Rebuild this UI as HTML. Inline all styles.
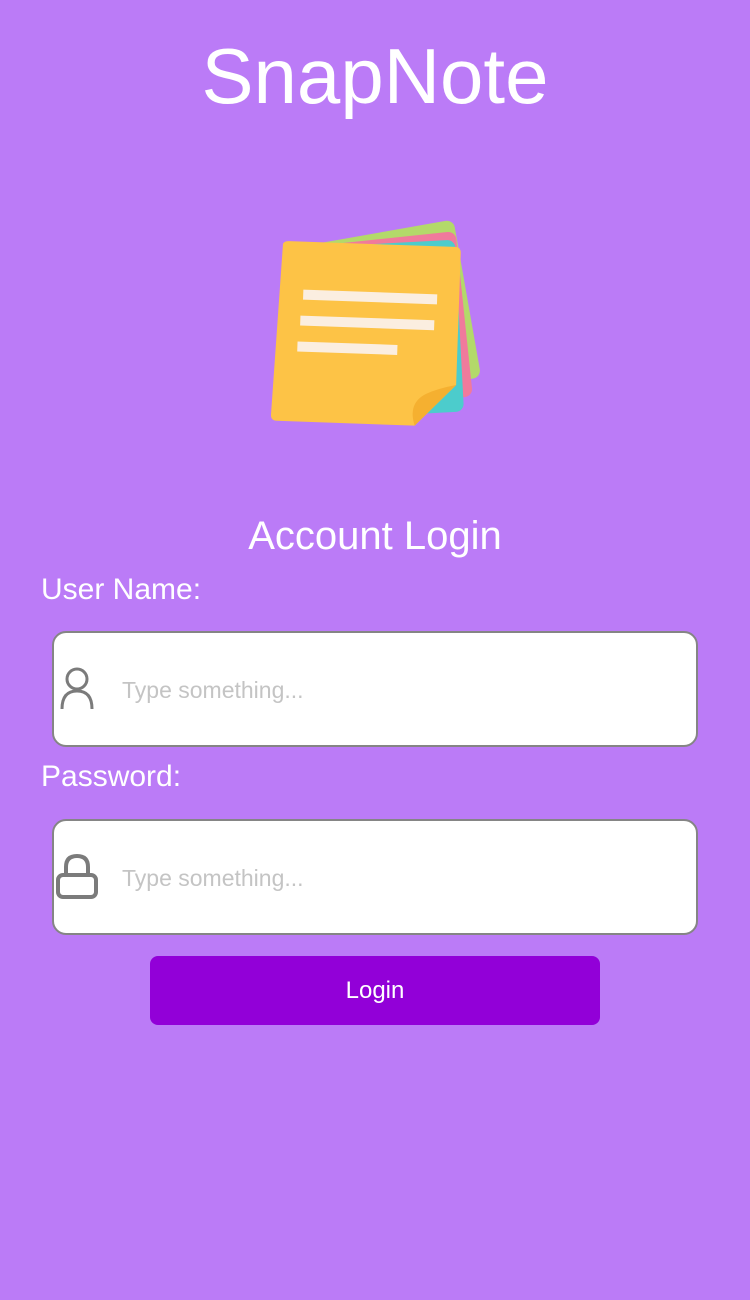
<!DOCTYPE html>
<html><head><meta charset="utf-8"><style>
body{margin:0;width:750px;height:1300px;background:#bb7bf7;font-family:"Liberation Sans",sans-serif;position:relative;overflow:hidden;color:#fff}
.abs{position:absolute}
.title{left:0;width:750px;top:28px;text-align:center;font-size:78px;line-height:96px}
.h2{left:0;width:750px;top:512px;text-align:center;font-size:40px;line-height:48px}
.lbl{left:41px;font-size:30px;line-height:36px}
.inp{left:52px;width:646px;height:116px;background:#fff;border:2px solid #858585;border-radius:14px;box-sizing:border-box}
.ph{left:122px;font-size:23px;color:#c4c4c4}
.btn{left:150px;top:956px;width:450px;height:69px;background:#9200d8;border-radius:8px;text-align:center;line-height:69px;font-size:24px}
</style></head><body>
<div class="abs title">SnapNote</div>
<svg class="abs" style="left:260px;top:210px" width="230" height="230" viewBox="0 0 230 230">
<g transform="rotate(-10 40 130)"><rect x="40" y="38" width="172" height="160" rx="8" fill="#b3d96a"/></g>
<g transform="rotate(-6 40 130)"><rect x="36" y="38" width="170" height="166" rx="8" fill="#f07a9c"/></g>
<g transform="rotate(-3 40 130)"><rect x="30" y="38" width="170" height="172" rx="8" fill="#4ccccc"/></g>
<g transform="rotate(2 110 120)">
<path d="M20 38 Q20 34 26 34 L192 34 Q198 34 198 40 L198 172 L158 214 L20 214 Q14 214 14 208 Z" fill="#fdc346"/>
<path d="M198 172 L158 214 Q150 192 168 182 Q180 176 198 172Z" fill="#f5b030"/>
<rect x="42" y="82" width="134" height="10" fill="#fbeee0"/>
<rect x="40" y="108" width="134" height="10" fill="#fbeee0"/>
<rect x="38" y="134" width="100" height="10" fill="#fbeee0"/>
</g>
</svg>
<div class="abs h2">Account Login</div>
<div class="abs lbl" style="top:572px">User Name:</div>
<div class="abs inp" style="top:631px"></div>
<svg class="abs" style="left:58px;top:667px" width="38" height="44" viewBox="0 0 38 44"><g fill="none" stroke="#7b7b7b" stroke-width="3"><circle cx="19" cy="12" r="10"/><path d="M4 42 Q4 24 19 24 Q34 24 34 42"/></g></svg>
<div class="abs ph" style="top:677px">Type something...</div>
<div class="abs lbl" style="top:759px">Password:</div>
<div class="abs inp" style="top:819px"></div>
<svg class="abs" style="left:55px;top:853px" width="44" height="48" viewBox="0 0 44 48"><g fill="none" stroke="#7b7b7b" stroke-width="4"><path d="M11 22 V14 Q11 3 22 3 Q33 3 33 14 V22"/><rect x="3" y="22" width="38" height="22" rx="5"/></g></svg>
<div class="abs ph" style="top:865px">Type something...</div>
<div class="abs btn">Login</div>
</body></html>
